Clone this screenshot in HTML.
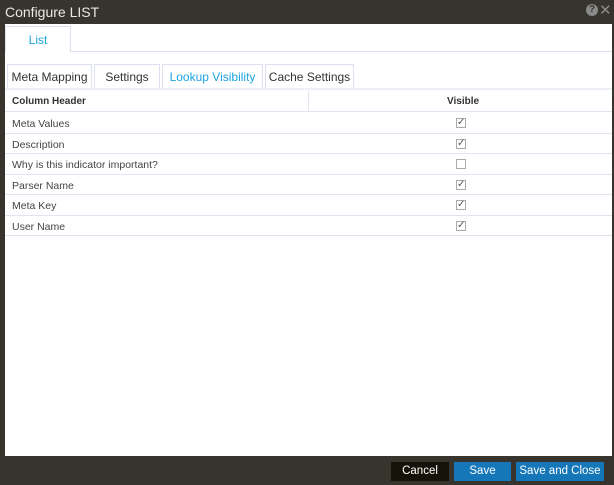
<!DOCTYPE html>
<html><head><style>
*{box-sizing:border-box;margin:0;padding:0}
body{width:614px;height:485px;background:#36342c;font-family:"Liberation Sans",sans-serif;position:relative;overflow:hidden}
.t{position:absolute;left:5px;top:4px;color:#e8e8e8;font-size:14px}
.ic{position:absolute;top:4px;left:586px;width:12px;height:12px;border-radius:50%;background:#8a8a8a;color:#36342c;font-size:10px;font-weight:bold;text-align:center;line-height:12px}
.x{position:absolute;top:1px;left:599px;color:#8a8a8a;font-size:15px}
.panel{position:absolute;left:5px;top:24px;width:607px;height:432px;background:#fff}
.lt{position:absolute;left:0;top:2px;width:66px;height:26px;border:1px solid #dde0f0;border-bottom:none;background:#fff;color:#1ca3e0;font-size:12px;text-align:center;line-height:26px}
.ll{position:absolute;left:66px;top:27px;right:0;height:1px;background:#dde0f0}
.tab{position:absolute;top:40px;height:25px;border:1px solid #dde0f0;border-bottom:none;font-size:12px;color:#333;text-align:center;line-height:25px}
.tl{position:absolute;left:0;right:0;top:64px;height:2px;background:#eceef8}
.row{position:absolute;left:0;right:0;height:20.5px;border-bottom:1px solid #e2e4f2;font-size:10.5px;color:#444;line-height:22px;padding-left:7px}
.cb{position:absolute;left:451px;top:5px;width:10px;height:10px;border:1px solid #aaa;background:#fff;font-size:10px;line-height:8px;color:#555;text-align:center}
.btn{position:absolute;top:462px;height:19px;color:#fff;font-size:11.5px;text-align:center;line-height:19px}
</style></head><body>
<div class="t">Configure LIST</div>
<div class="ic">?</div><div class="x">✕</div>
<div class="panel">
<div class="lt">List</div><div class="ll"></div>
<div class="tab" style="left:2px;width:85px">Meta Mapping</div>
<div class="tab" style="left:89px;width:66px">Settings</div>
<div class="tab" style="left:157px;width:101px;color:#1ca3e0">Lookup Visibility</div>
<div class="tab" style="left:260px;width:89px">Cache Settings</div>
<div class="tl"></div>
<div class="row" style="top:67px;font-weight:bold;font-size:10px;color:#333">Column Header<div style="position:absolute;left:303px;top:0;bottom:0;width:1px;background:#e2e4f2"></div><div style="position:absolute;left:442px;top:0">Visible</div></div>
<div class="row" style="top:89px">Meta Values<div class="cb">✓</div></div>
<div class="row" style="top:109.5px">Description<div class="cb">✓</div></div>
<div class="row" style="top:130px">Why is this indicator important?<div class="cb"></div></div>
<div class="row" style="top:150.5px">Parser Name<div class="cb">✓</div></div>
<div class="row" style="top:171px">Meta Key<div class="cb">✓</div></div>
<div class="row" style="top:191.5px">User Name<div class="cb">✓</div></div>
</div>
<div class="btn" style="left:391px;width:58px;background:#141209">Cancel</div>
<div class="btn" style="left:454px;width:57px;background:#1577b8">Save</div>
<div class="btn" style="left:516px;width:88px;background:#1577b8">Save and Close</div>
</body></html>
